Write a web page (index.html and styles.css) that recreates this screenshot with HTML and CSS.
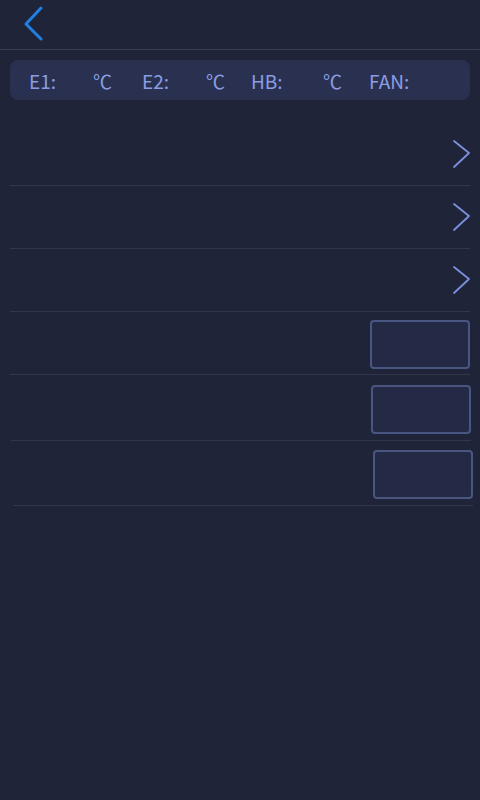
FILE: index.html
```html
<!DOCTYPE html>
<html>
<head>
<meta charset="utf-8">
<link rel="stylesheet" href="styles.css">
</head>
<body>
<div class="page">
  <header class="header">
    <svg class="back" width="24" height="36" viewBox="0 0 24 36">
      <polyline points="18,2 3,18 18,33" fill="none" stroke="#1f7fe3" stroke-width="3" stroke-linecap="round" stroke-linejoin="round"/>
    </svg>
  </header>
  <div class="stats">
    <span class="lbl w64">E1:</span><span class="unit w49">℃</span>
    <span class="lbl w64">E2:</span><span class="unit w45">℃</span>
    <span class="lbl w72">HB:</span><span class="unit w46">℃</span>
    <span class="lbl">FAN:</span>
  </div>
  <div class="list">
    <div class="row"><svg class="chev" width="20" height="30" viewBox="0 0 20 30"><polyline points="2,2 17,14 2,28" fill="none" stroke="#7d90e0" stroke-width="1.8" stroke-linecap="round" stroke-linejoin="round"/></svg></div>
    <div class="row"><svg class="chev" width="20" height="30" viewBox="0 0 20 30"><polyline points="2,2 17,14 2,28" fill="none" stroke="#7d90e0" stroke-width="1.8" stroke-linecap="round" stroke-linejoin="round"/></svg></div>
    <div class="row"><svg class="chev" width="20" height="30" viewBox="0 0 20 30"><polyline points="2,2 17,14 2,28" fill="none" stroke="#7d90e0" stroke-width="1.8" stroke-linecap="round" stroke-linejoin="round"/></svg></div>
    <div class="row row-a"><div class="box"></div></div>
    <div class="row row-b"><div class="box"></div></div>
    <div class="row row-c"><div class="box"></div></div>
  </div>
</div>
</body>
</html>
```
FILE: styles.css
```css
html, body {
  margin: 0;
  padding: 0;
  background: #1f2438;
}
.page {
  width: 480px;
  height: 800px;
  background: #1f2438;
  font-family: "Noto Sans CJK SC", "Noto Sans", sans-serif;
}
.header {
  height: 49px;
  border-bottom: 1px solid #363c52;
  display: flex;
  align-items: center;
  padding-left: 23px;
}
.back {
  display: block;
  margin-top: -1px;
}
.stats {
  margin: 10px 10px 0 10px;
  height: 40px;
  background: #2a3150;
  border-radius: 8px;
  display: flex;
  align-items: center;
  padding-left: 19px;
  color: #8a9de2;
  font-size: 19px;
}
.lbl, .unit {
  white-space: pre;
  flex: none;
}
.w64 { width: 64px; }
.w49 { width: 49px; }
.w45 { width: 45px; }
.w72 { width: 72px; }
.w46 { width: 46px; }
.list {
  margin-top: 22px;
}
.row {
  margin: 0 10px;
  height: 62px;
  border-bottom: 1px solid #30374d;
  display: flex;
  align-items: center;
  justify-content: flex-end;
}
.row:first-child {
  height: 63px;
}
.chev {
  display: block;
  margin-right: -2px;
}
.box {
  width: 96px;
  height: 45px;
  border: 2px solid #4a5682;
  border-radius: 4px;
  background: #242a45;
}
.row-a .box { margin-top: 2px; }
.row-b {
  height: 65px;
  margin-left: 11px;
  margin-right: 9px;
}
.row-b .box { margin-top: 3px; }
.row-c {
  height: 64px;
  margin-left: 13px;
  margin-right: 7px;
}
.row-c .box { margin-top: 2px; }
```
